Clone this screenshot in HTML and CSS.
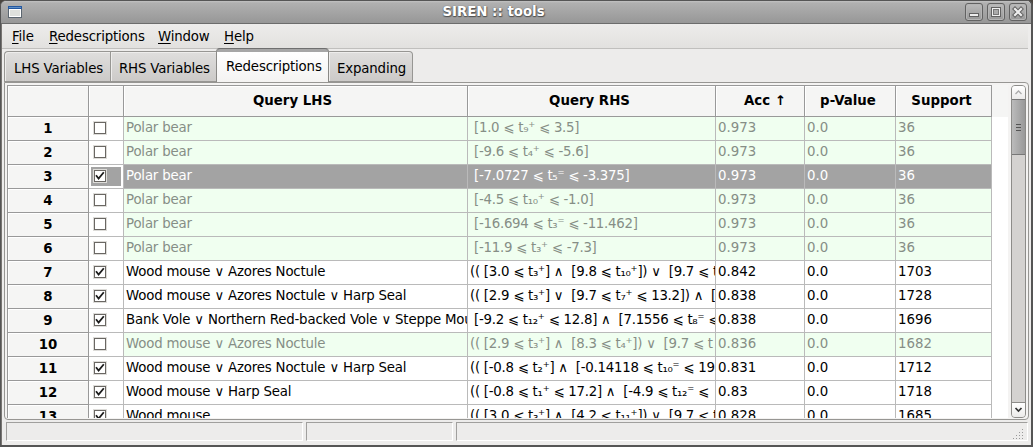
FILE: index.html
```html
<!DOCTYPE html>
<html lang="en">
<head>
<meta charset="utf-8">
<title>SIREN :: tools</title>
<link rel="stylesheet" href="styles.css">
</head>
<body>
<svg class="defs" width="0" height="0"><symbol id="check" viewBox="0 0 12 12"><path d="M2 5.300L4.600 8.600L9.800 2.200" fill="none" stroke="#1c1c1c" stroke-width="1.800"/></symbol></svg>
<div class="window">
  <header class="titlebar">
    <svg class="app-icon" width="14" height="12" viewBox="0 0 14 12"><rect width="14" height="12" fill="#5c6670"/><rect x="1" y="3" width="12" height="8" fill="#fff"/><rect x="2" y="4" width="10" height="6" fill="#dfe1dd"/><rect width="14" height="3" fill="#2458a0"/><rect x="1" y="1" width="12" height="1" fill="#5f8fc8"/></svg>
    <h1 class="title">SIREN :: tools</h1>
    <div class="controls">
      <span class="control"><svg width="16" height="16" viewBox="0 0 16 16"><rect x="3.500" y="9.500" width="9" height="3" fill="#eee" stroke="#626262"/></svg></span>
      <span class="control"><svg width="16" height="16" viewBox="0 0 16 16"><rect x="3.500" y="3.500" width="9" height="9" fill="#eee" stroke="#626262"/><rect x="5.500" y="5.500" width="5" height="5" fill="#aaa" stroke="#777"/></svg></span>
      <span class="control"><svg width="16" height="16" viewBox="0 0 16 16"><path d="M5 5L11 11M11 5L5 11" stroke="#626262" stroke-width="4.200" stroke-linecap="square"/><path d="M5 5L11 11M11 5L5 11" stroke="#eee" stroke-width="2.200" stroke-linecap="square"/></svg></span>
    </div>
  </header>
  <nav class="menubar"><span class="m-file"><u>F</u>ile</span><span class="m-red"><u>R</u>edescriptions</span><span class="m-win"><u>W</u>indow</span><span class="m-help"><u>H</u>elp</span></nav>
  <div class="tabs">
    <div class="tab tab-lhs">LHS Variables</div><div class="tab tab-rhs">RHS Variables</div><div class="tab tab-active">Redescriptions</div><div class="tab tab-exp">Expanding</div>
  </div>
  <main class="page">
    <div class="grid">
      <div class="row head"><b class="num"></b><b class="chk"></b><b class="lhs">Query LHS</b><b class="rhs">Query RHS</b><b class="acc">Acc ↑</b><b class="pv">p-Value</b><b class="sup">Support</b></div>
      <div class="row off"><b class="num">1</b><span class="chk"><i class="box"></i></span><span class="lhs">Polar bear</span><span class="rhs"> [1.0 ⩽ t₉⁺ ⩽ 3.5]</span><span class="acc">0.973</span><span class="pv">0.0</span><span class="sup">36</span></div>
      <div class="row off"><b class="num">2</b><span class="chk"><i class="box"></i></span><span class="lhs">Polar bear</span><span class="rhs"> [-9.6 ⩽ t₄⁺ ⩽ -5.6]</span><span class="acc">0.973</span><span class="pv">0.0</span><span class="sup">36</span></div>
      <div class="row selected"><b class="num">3</b><span class="chk"><i class="box"><svg><use href="#check"/></svg></i></span><span class="lhs">Polar bear</span><span class="rhs"> [-7.0727 ⩽ t₅⁼ ⩽ -3.375]</span><span class="acc">0.973</span><span class="pv">0.0</span><span class="sup">36</span></div>
      <div class="row off"><b class="num">4</b><span class="chk"><i class="box"></i></span><span class="lhs">Polar bear</span><span class="rhs"> [-4.5 ⩽ t₁₀⁺ ⩽ -1.0]</span><span class="acc">0.973</span><span class="pv">0.0</span><span class="sup">36</span></div>
      <div class="row off"><b class="num">5</b><span class="chk"><i class="box"></i></span><span class="lhs">Polar bear</span><span class="rhs"> [-16.694 ⩽ t₃⁼ ⩽ -11.462]</span><span class="acc">0.973</span><span class="pv">0.0</span><span class="sup">36</span></div>
      <div class="row off"><b class="num">6</b><span class="chk"><i class="box"></i></span><span class="lhs">Polar bear</span><span class="rhs"> [-11.9 ⩽ t₃⁺ ⩽ -7.3]</span><span class="acc">0.973</span><span class="pv">0.0</span><span class="sup">36</span></div>
      <div class="row"><b class="num">7</b><span class="chk"><i class="box"><svg><use href="#check"/></svg></i></span><span class="lhs">Wood mouse ∨ Azores Noctule</span><span class="rhs">(( [3.0 ⩽ t₃⁺] ∧  [9.8 ⩽ t₁₀⁺]) ∨  [9.7 ⩽ t</span><span class="acc">0.842</span><span class="pv">0.0</span><span class="sup">1703</span></div>
      <div class="row"><b class="num">8</b><span class="chk"><i class="box"><svg><use href="#check"/></svg></i></span><span class="lhs">Wood mouse ∨ Azores Noctule ∨ Harp Seal</span><span class="rhs">(( [2.9 ⩽ t₃⁺] ∨  [9.7 ⩽ t₇⁺ ⩽ 13.2]) ∧  [</span><span class="acc">0.838</span><span class="pv">0.0</span><span class="sup">1728</span></div>
      <div class="row"><b class="num">9</b><span class="chk"><i class="box"><svg><use href="#check"/></svg></i></span><span class="lhs">Bank Vole ∨ Northern Red-backed Vole ∨ Steppe Mou</span><span class="rhs"> [-9.2 ⩽ t₁₂⁺ ⩽ 12.8] ∧  [7.1556 ⩽ t₈⁼ ⩽</span><span class="acc">0.838</span><span class="pv">0.0</span><span class="sup">1696</span></div>
      <div class="row off"><b class="num">10</b><span class="chk"><i class="box"></i></span><span class="lhs">Wood mouse ∨ Azores Noctule</span><span class="rhs">(( [2.9 ⩽ t₃⁺] ∧  [8.3 ⩽ t₄⁺]) ∨  [9.7 ⩽ t</span><span class="acc">0.836</span><span class="pv">0.0</span><span class="sup">1682</span></div>
      <div class="row"><b class="num">11</b><span class="chk"><i class="box"><svg><use href="#check"/></svg></i></span><span class="lhs">Wood mouse ∨ Azores Noctule ∨ Harp Seal</span><span class="rhs">(( [-0.8 ⩽ t₂⁺] ∧  [-0.14118 ⩽ t₁₀⁼ ⩽ 19</span><span class="acc">0.831</span><span class="pv">0.0</span><span class="sup">1712</span></div>
      <div class="row"><b class="num">12</b><span class="chk"><i class="box"><svg><use href="#check"/></svg></i></span><span class="lhs">Wood mouse ∨ Harp Seal</span><span class="rhs">(( [-0.8 ⩽ t₁⁺ ⩽ 17.2] ∧  [-4.9 ⩽ t₁₂⁼ ⩽</span><span class="acc">0.83</span><span class="pv">0.0</span><span class="sup">1718</span></div>
      <div class="row"><b class="num">13</b><span class="chk"><i class="box"><svg><use href="#check"/></svg></i></span><span class="lhs">Wood mouse</span><span class="rhs">(( [3.0 ⩽ t₃⁺] ∧  [4.2 ⩽ t₁₁⁺]) ∨  [9.7 ⩽ t</span><span class="acc">0.828</span><span class="pv">0.0</span><span class="sup">1685</span></div>
    </div>
    <div class="scrollbar">
      <div class="arrow up"><svg width="13" height="13" viewBox="0 0 13 13"><path d="M3.500 8L6.500 5L9.500 8" fill="none" stroke="#aaa" stroke-width="1.300"/></svg></div>
      <div class="thumb"><i></i><i></i><i></i></div>
      <div class="arrow down"><svg width="13" height="13" viewBox="0 0 13 13"><path d="M3.500 5L6.500 8L9.500 5" fill="none" stroke="#333" stroke-width="1.700"/></svg></div>
    </div>
  </main>
  <footer class="status"><div class="pane p1"></div><div class="pane p2"></div><div class="pane p3"><svg width="12" height="12" viewBox="0 0 12 12"><path d="M9 1h1M9 4h1M6 4h1M9 7h1M6 7h1M3 7h1M9 10h1M6 10h1M3 10h1M0 10h1" transform="translate(0 .5)" stroke="#999"/></svg></div></footer>
</div>
</body>
</html>
```
FILE: styles.css
```css
* { box-sizing: border-box; }
body { margin: 0; background: #4a453f; font: 13.333px/16px "DejaVu Sans", sans-serif; color: #000; }
.defs { display: none; }
.window { width: 1033px; height: 447px; display: flex; flex-direction: column; background: #edeceb; border: 1px solid #555; border-width: 1px 2px 2px 1px; border-radius: 6px 6px 0 0; overflow: hidden; box-shadow: inset 1px 0 #787572; }
.titlebar { height: 23px; flex: none; display: flex; align-items: center; padding: 0 4px 0 7px; background: linear-gradient(#c2c2c2, #b0b0b0 2px, #979797); border-bottom: 1px solid #6c6c6c; }
.app-icon { flex: none; }
.title { flex: 1; margin: 0; text-align: center; font-size: 13.333px; line-height: 20px; color: #fff; text-shadow: 0 0 1px #555, 0 1px 1px #555, 1px 1px 1px #666; }
.controls { display: flex; gap: 4px; }
.control { width: 18px; height: 18px; display: block; border: 1px solid #626262; border-radius: 3px; background: linear-gradient(#bbb, #989898); box-shadow: inset 0 0 0 1px #b5b5b5; }
.control svg { display: block; }
.menubar { height: 25px; flex: none; display: flex; padding: 4px 0 0 10px; margin: 0 3px 0 1px; line-height: 17px; border-bottom: 1px solid #c0bfbd; background: linear-gradient(#edeceb, #e2e1df); }
.menubar u { text-underline-offset: 2px; text-decoration-thickness: 1px; text-decoration-skip-ink: none; }
.m-file { width: 37px; }
.m-red { width: 109px; }
.m-win { width: 66px; }
.menubar, .tab { white-space: nowrap; letter-spacing: -0.16px; }
.tabs { height: 33px; flex: none; display: flex; align-items: flex-end; padding-left: 3px; position: relative; }
.tab { height: 31px; padding: 8px 0 0 8px; border: 1px solid #979693; border-radius: 4px 4px 0 0; border-right-width: 0; background: linear-gradient(#dfdedd, #cccac8); box-shadow: inset 1px 1px #eeedec; line-height: 18px; }
.tab-lhs { width: 106px; border-top-right-radius: 0; padding-left: 9px; }
.tab-rhs { width: 106px; border-top-left-radius: 0; border-top-right-radius: 0; }
.tab-active { width: 113px; height: 34px; padding: 5px 0 0 9px; border: 1px solid #8a8986; border-top-color: #6f6f6f; border-bottom: 0; background: linear-gradient(#a6a6a6 0 3px, #fff 3px, #f4f3f2); z-index: 1; box-shadow: none; line-height: 23px; }
.tab-active { padding-top: 6px; }
.tab-exp { width: 84px; border-right-width: 1px; border-left: 0; border-top-left-radius: 0; }
.page { height: 338px; flex: none; display: flex; margin: 0 2px 0 3px; padding: 2px; border: 1px solid #979693; border-radius: 0 4px 4px 4px; background: #f4f3f2; }
.grid { width: 1001px; height: 333px; overflow: hidden; background: #fff; }
.row { width: 985px; height: 24px; display: flex; border-left: 1px solid #999; }
.row > * { flex: none; height: 24px; overflow: hidden; white-space: pre; border-right: 1px solid #bababa; border-bottom: 1px solid #bababa; padding: 2px 0 0 2px; line-height: 17px; }
.row .num { width: 81px; padding: 3px 0 0; text-align: center; background: #f5f5f4; border-color: #999; box-shadow: inset 1px 1px #fff; }
.chk { width: 35px; }
.lhs { width: 344px; }
.rhs { width: 248px; }
.acc { width: 89px; }
.pv { width: 91px; }
.sup { width: 96px; }
span.lhs { letter-spacing: -0.18px; }
span.rhs { letter-spacing: -0.26px; }
.row.head { width: 1001px; height: 32px; background: #f5f5f4; }
.head > *, .head .num { height: 32px; border-color: #999; border-top: 1px solid #999; padding: 6px 6px 0 0; text-align: center; line-height: 18px; box-shadow: inset 1px 1px #fff; }
.row.head > .acc { padding: 6px 0 0 10px; }
.row.head > .rhs, .row.head > .pv, .row.head > .sup { padding-right: 4px; }
.off > span { color: #868e86; background: #f0fff0; }
.off > .chk { background: #fff; }
.selected > span { color: #fff; background: #a3a3a3; }
.selected > .chk { box-shadow: inset 0 0 0 2px #fff; }
.row .chk { padding: 5px 0 0 5px; }
.box { display: block; width: 12px; height: 12px; border: 1px solid #6a6763; background: #fff; box-shadow: 0 0 0 1px #dddcd9; }
.box svg { display: block; width: 12px; height: 12px; margin: -1px; }
.scrollbar { width: 15px; height: 333px; margin-left: 3px; display: flex; flex-direction: column; border: 1px solid #8d8c89; border-radius: 4px; background: #d4d2d0; overflow: hidden; }
.arrow { height: 13px; flex: none; background: linear-gradient(#fff, #ecebea); }
.arrow svg { display: block; }
.thumb { height: 56px; display: flex; flex-direction: column; align-items: center; justify-content: center; gap: 2px; border: 1px solid #777; border-width: 1px 0; background: linear-gradient(90deg, #bbb, #999); }
.thumb i { width: 5px; height: 1px; background: #555; }
.down { margin-top: auto; height: 15px; border-top: 1px solid #8d8c89; }
.status { display: flex; gap: 3px; padding: 2px 3px 0 5px; }
.pane { height: 19px; border: 1px solid; border-color: #a09f9d #fff #fff #a09f9d; }
.p1 { width: 297px; }
.p2 { width: 147px; }
.p3 { flex: 1; display: flex; justify-content: flex-end; align-items: flex-end; padding-right: 2px; }
```
